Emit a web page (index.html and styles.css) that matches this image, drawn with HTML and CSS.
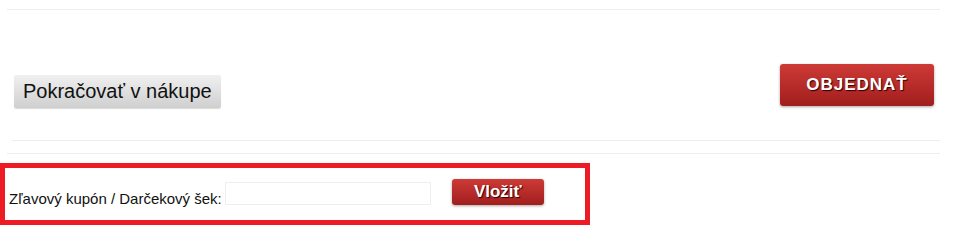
FILE: index.html
```html
<!DOCTYPE html>
<html lang="sk">
<head>
    <meta charset="UTF-8">
    <meta name="viewport" content="width=device-width, initial-scale=1.0">
    <title>Košík</title>
    <link rel="stylesheet" href="styles.css">
</head>
<body>
    <div class="cart-footer">
        <hr class="line line-top">
        <div class="actions">
            <button class="btn-continue">Pokračovať v nákupe</button>
            <button class="btn-order">OBJEDNAŤ</button>
        </div>
        <hr class="line line-mid">
        <hr class="line line-bottom">
    </div>

    <div class="coupon-box">
        <form class="coupon-form">
            <label for="coupon">Zľavový kupón / Darčekový šek:</label>
            <input type="text" id="coupon" name="coupon">
            <button type="submit" class="btn-apply">Vložiť</button>
        </form>
    </div>
</body>
</html>
```

FILE: styles.css
```css
html, body {
    margin: 0;
    padding: 0;
    background: #fff;
}
body {
    font-family: "Liberation Sans", Arial, sans-serif;
    color: #111;
}
.cart-footer {
    width: 933px;
    padding: 9px 0 0 7px;
}
.line {
    height: 0;
    margin: 0;
    border: none;
    border-top: 1px solid #eeeeee;
}
.line-mid {
    margin-left: 5px;
    margin-top: 32px;
}
.line-bottom {
    margin-top: 12px;
}
.actions {
    display: flex;
    justify-content: space-between;
    align-items: flex-start;
    padding: 54px 6px 0 7px;
}
.btn-continue {
    margin-top: 11px;
    height: 33px;
    padding: 0 9px;
    font-family: inherit;
    font-size: 20px;
    color: #111;
    background: linear-gradient(#f0f0f0, #cfcfcf);
    border: none;
    border-radius: 2px;
    box-shadow: 0 1px 1px rgba(0, 0, 0, 0.15);
    cursor: pointer;
}
.btn-order, .btn-apply {
    font-family: inherit;
    font-weight: bold;
    color: #fff;
    text-shadow: 1px 1px 1px #2a0000;
    background: linear-gradient(#cd3a36, #a11e1e);
    border: none;
    border-radius: 3px;
    box-shadow: 0 1px 3px rgba(0, 0, 0, 0.35);
    cursor: pointer;
}
.btn-order {
    width: 154px;
    height: 42px;
    font-size: 17px;
    letter-spacing: 1px;
}
.coupon-box {
    width: 580px;
    height: 52px;
    margin-top: 9px;
    border: 5px solid #ed1c24;
}
.coupon-form {
    display: flex;
    align-items: flex-start;
    padding: 11px 0 0 4px;
}
.coupon-form label {
    font-size: 15px;
    margin-top: 11px;
    margin-right: 3px;
}
.coupon-form input {
    width: 206px;
    height: 23px;
    margin-top: 3px;
    padding: 0 4px;
    box-sizing: border-box;
    border: 1px solid #eeeeee;
    border-radius: 0;
}
.btn-apply {
    width: 92px;
    height: 26px;
    margin-left: 21px;
    font-size: 17px;
}
```
